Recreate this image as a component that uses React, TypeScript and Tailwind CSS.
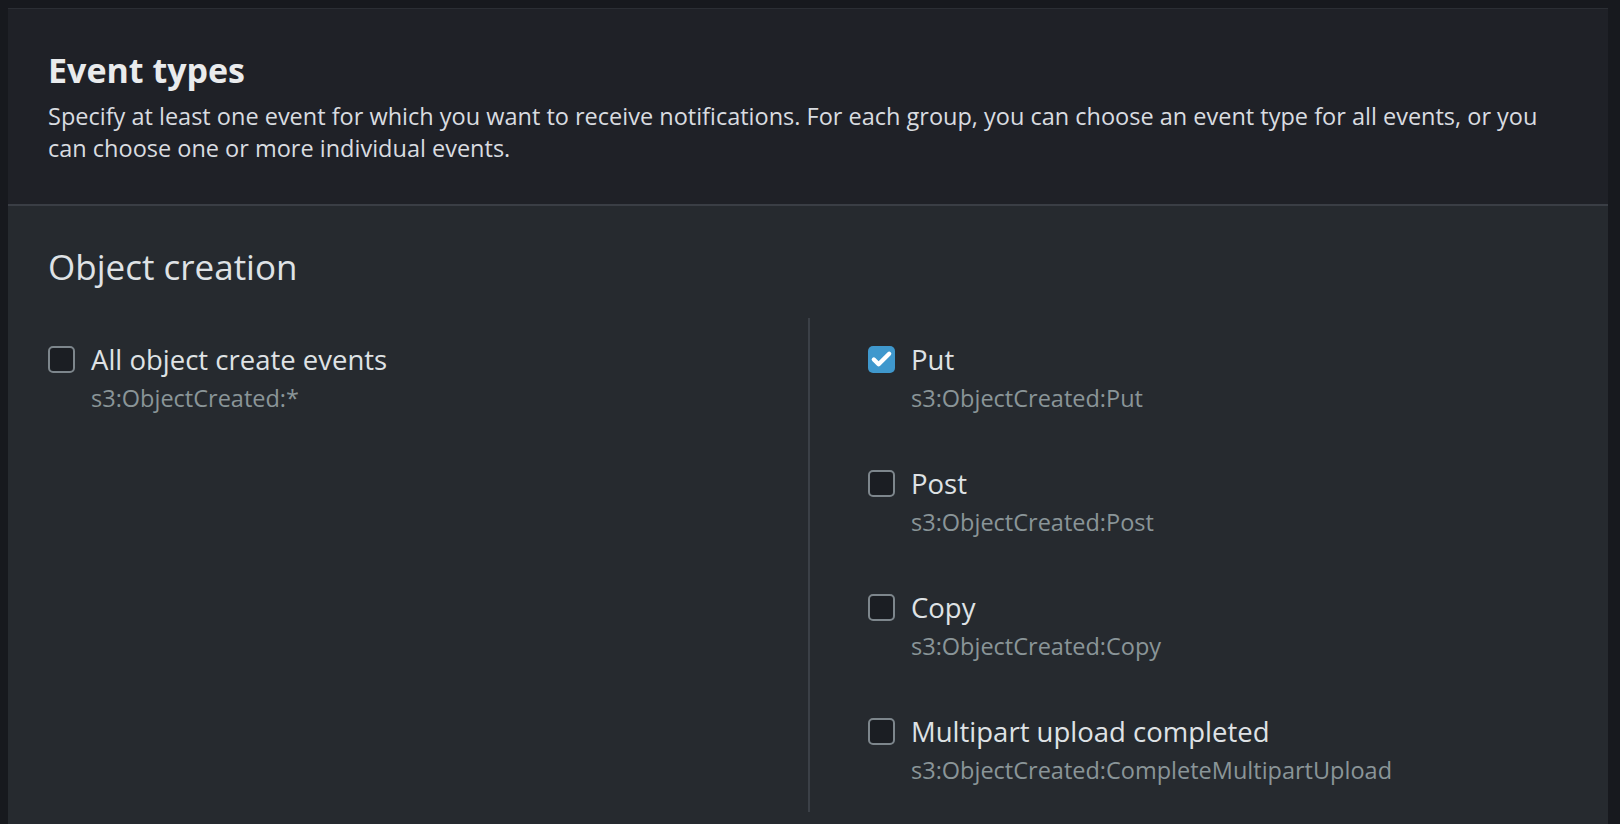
import { Check } from 'lucide-react';

const font = { fontFamily: '"Open Sans", "Noto Sans", sans-serif' };

type Opt = { label: string; code: string; checked?: boolean };

const singles: Opt[] = [
  { label: 'Put', code: 's3:ObjectCreated:Put', checked: true },
  { label: 'Post', code: 's3:ObjectCreated:Post' },
  { label: 'Copy', code: 's3:ObjectCreated:Copy' },
  { label: 'Multipart upload completed', code: 's3:ObjectCreated:CompleteMultipartUpload' },
];

function CheckRow({ opt }: { opt: Opt }) {
  return (
    <label className="flex gap-4 items-start">
      <span
        className={`mt-[5px] w-[27px] h-[27px] rounded-[5px] flex items-center justify-center shrink-0 ${
          opt.checked ? 'bg-[#3f98cd]' : 'bg-[#1b1e23] border-2 border-[#7d868c]'
        }`}
      >
        {opt.checked && <Check className="w-[23px] h-[23px] text-white" strokeWidth={4.5} />}
      </span>
      <span className="flex flex-col">
        <span className="text-[27.5px] leading-[37px] text-[#dfe2e5]">{opt.label}</span>
        <span className="text-[23.5px] leading-[40px] text-[#8a9598]">{opt.code}</span>
      </span>
    </label>
  );
}

export default function App() {
  return (
    <div className="h-screen overflow-hidden bg-[#17191e] pt-2 pl-2 pr-3" style={font}>
      <div className="border-t border-[#2b2e34] h-full flex flex-col">
        <div className="bg-[#1f2127] px-10 pt-[40px] pb-[40px] border-b-2 border-[#3a3e45]">
          <h2 className="text-[34px] leading-[42px] font-bold text-[#e9ebed]">Event types</h2>
          <p className="mt-[9px] text-[23.5px] leading-[32px] text-[#d9dce0]">
            Specify at least one event for which you want to receive notifications. For each group, you can
            choose an event type for all events, or you can choose one or more individual events.
          </p>
        </div>
        <div className="bg-[#262a2f] px-10 pt-[39px] flex-1">
          <h3 className="text-[35px] leading-[44px] text-[#dfe2e5]">Object creation</h3>
          <div className="grid grid-cols-2 mt-[29px]">
            <div className="pt-[23px] pr-6">
              <CheckRow opt={{ label: 'All object create events', code: 's3:ObjectCreated:*' }} />
            </div>
            <div className="border-l-2 border-[#3b4047] pl-[58px] pt-[23px] pb-[22px] flex flex-col gap-[47px]">
              {singles.map((o) => (
                <CheckRow key={o.code} opt={o} />
              ))}
            </div>
          </div>
        </div>
      </div>
    </div>
  );
}
